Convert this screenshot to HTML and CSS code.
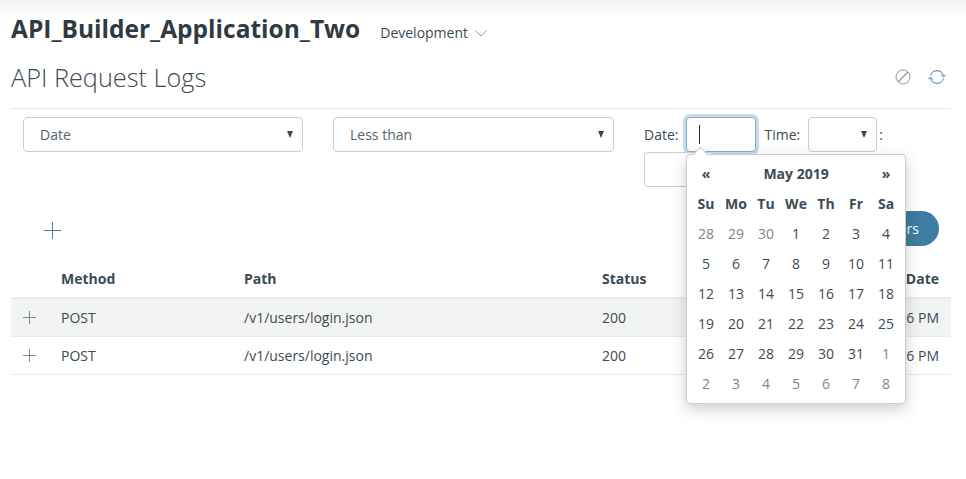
FILE: index.html
```html
<!DOCTYPE html>
<html lang="en">
<head>
    <meta charset="UTF-8">
    <meta name="viewport" content="width=device-width, initial-scale=1.0">
    <title>API Request Logs</title>
    <link rel="stylesheet" href="styles.css">
</head>
<body>
    <div class="top-shade"></div>
    <header class="app-header">
        <h1>API_Builder_Application_Two</h1>
        <span class="env">Development
            <svg class="chevron" width="12" height="7" viewBox="0 0 12 7"><path d="M0.5 0.5L6 6L11.500 0.5" fill="none" stroke="#8a97a0" stroke-width="1"/></svg>
        </span>
    </header>
    <div class="page-title">
        <h2>API Request Logs</h2>
        <div class="page-actions">
            <svg width="16" height="16" viewBox="0 0 16 16"><circle cx="8" cy="8" r="7" fill="none" stroke="#8f9ba3" stroke-width="1"/><path d="M3.300 12.700L12.700 3.300" stroke="#8f9ba3" stroke-width="1.300"/></svg>
            <svg width="18" height="16" viewBox="0 0 18 16"><path d="M2.500 6.500A6.800 6.800 0 0 1 15.500 6.500M15.500 9.500A6.800 6.800 0 0 1 2.500 9.500" fill="none" stroke="#3f7ca3" stroke-width="1"/><path d="M13 5.500L15.500 8L18 5.500M0 10.500L2.500 8L5 10.500" fill="none" stroke="#3f7ca3" stroke-width="1"/></svg>
        </div>
    </div>
    <form class="filter-row">
        <span class="select-wrap"><select class="field field-wide"><option>Date</option></select></span>
        <span class="select-wrap field-second"><select class="field field-wide"><option>Less than</option></select></span>
        <div class="date-time">
            <label>Date:</label>
            <span class="date-wrap">
                <input class="field field-date" type="text">
                <span class="caret"></span>
            </span>
            <label>Time:</label>
            <span class="select-wrap field-time"><select class="field"><option></option></select></span>
            <span>:</span>
            <span class="select-wrap field-minute"><select class="field"><option></option></select></span>
        </div>
    </form>
    <div class="filter-actions">
        <svg class="add-filter" width="17" height="17" viewBox="0 0 17 17"><path d="M0 8.500H17M8.500 0V17" stroke="#4f7aa3" stroke-width="1"/></svg>
        <button class="apply" type="button">Apply Filters</button>
    </div>
    <table class="logs">
        <thead>
            <tr><th class="col-toggle"></th><th class="col-method">Method</th><th class="col-path">Path</th><th class="col-status">Status</th><th class="col-date">Date</th></tr>
        </thead>
        <tbody>
            <tr class="odd">
                <td><svg width="13" height="13" viewBox="0 0 13 13"><path d="M0 6.500H13M6.500 0V13" stroke="#6f9296" stroke-width="1"/></svg></td>
                <td>POST</td><td>/v1/users/login.json</td><td>200</td><td class="col-date">6 PM</td>
            </tr>
            <tr>
                <td><svg width="13" height="13" viewBox="0 0 13 13"><path d="M0 6.500H13M6.500 0V13" stroke="#6f9296" stroke-width="1"/></svg></td>
                <td>POST</td><td>/v1/users/login.json</td><td>200</td><td class="col-date">6 PM</td>
            </tr>
        </tbody>
    </table>
    <div class="datepicker">
        <table>
            <colgroup><col><col><col><col><col><col><col></colgroup>
            <thead>
                <tr class="dp-nav"><th>&laquo;</th><th colspan="5">May 2019</th><th>&raquo;</th></tr>
                <tr><th>Su</th><th>Mo</th><th>Tu</th><th>We</th><th>Th</th><th>Fr</th><th>Sa</th></tr>
            </thead>
            <tbody>
                <tr><td class="other">28</td><td class="other">29</td><td class="other">30</td><td>1</td><td>2</td><td>3</td><td>4</td></tr>
                <tr><td>5</td><td>6</td><td>7</td><td>8</td><td>9</td><td>10</td><td>11</td></tr>
                <tr><td>12</td><td>13</td><td>14</td><td>15</td><td>16</td><td>17</td><td>18</td></tr>
                <tr><td>19</td><td>20</td><td>21</td><td>22</td><td>23</td><td>24</td><td>25</td></tr>
                <tr><td>26</td><td>27</td><td>28</td><td>29</td><td>30</td><td>31</td><td class="other">1</td></tr>
                <tr><td class="other">2</td><td class="other">3</td><td class="other">4</td><td class="other">5</td><td class="other">6</td><td class="other">7</td><td class="other">8</td></tr>
            </tbody>
        </table>
    </div>
</body>
</html>
```
FILE: styles.css
```css
body {
    font-family: "Open Sans", sans-serif;
    font-size: 14px;
    line-height: 20px;
    color: #3c4a54;
    margin: 0;
    padding: 0 15px 0 11px;
    background-color: white;
    overflow: hidden;
    height: 479px;
    box-sizing: border-box;
    position: relative;
}

.top-shade {
    position: absolute;
    top: 0;
    left: 0;
    right: 0;
    height: 16px;
    background: linear-gradient(#f1f1f1, white);
}

.app-header {
    position: relative;
    display: flex;
    align-items: baseline;
    height: 59px;
    padding-top: 12px;
    box-sizing: border-box;
}

.app-header h1 {
    margin: 0;
    font-size: 24.5px;
    line-height: 33px;
    font-weight: 700;
    color: #2f3a42;
}

.env {
    margin-left: 20px;
}

.chevron {
    margin-left: 3px;
    vertical-align: 1px;
}

.page-title {
    display: flex;
    justify-content: space-between;
    align-items: center;
    height: 39px;
    border-bottom: 1px solid #e6e8e9;
    padding-bottom: 10px;
}

.page-title h2 {
    margin: -3px 0 0;
    font-size: 25.3px;
    line-height: 39px;
    font-weight: 300;
}

.page-actions {
    display: flex;
    gap: 17px;
    align-items: center;
    margin-top: -4px;
    padding-right: 5px;
}

.filter-row {
    display: flex;
    padding: 8px 0 0 12px;
    height: 102px;
    box-sizing: border-box;
}

.field {
    font-family: inherit;
    font-size: 14px;
    color: #55626b;
    width: 100%;
    height: 35px;
    padding-left: 16px;
    border: 1px solid #c9ced2;
    border-radius: 4px;
    background-color: white;
    box-sizing: border-box;
    appearance: none;
}

.select-wrap {
    position: relative;
    display: block;
    width: 280px;
    height: 35px;
}

.select-wrap::after {
    content: "";
    position: absolute;
    right: 10px;
    top: 14px;
    border-left: 3.500px solid transparent;
    border-right: 3.500px solid transparent;
    border-top: 7px solid #444;
}

.field-second {
    width: 281px;
    margin-left: 30px;
}

.date-time {
    display: flex;
    flex-wrap: wrap;
    align-items: center;
    align-content: flex-start;
    width: 260px;
    margin-left: 30px;
}

.date-wrap {
    position: relative;
    display: flex;
    margin: 0 8px 0 8px;
}

.field-date {
    width: 70px;
    border-color: #7fadc9;
    box-shadow: 0 0 0 3px #c9dbe6;
    outline: none;
}

.caret {
    position: absolute;
    left: 13px;
    top: 8px;
    width: 1px;
    height: 19px;
    background-color: #333;
}

.field-time {
    width: 69px;
    margin: 0 2px 0 8px;
}

.field-minute {
    width: 70px;
}

.filter-actions {
    display: flex;
    justify-content: space-between;
    align-items: center;
    height: 35px;
    padding: 0 12px 0 33px;
}

.add-filter {
    margin-top: 4px;
}

.apply {
    font-family: inherit;
    font-size: 14px;
    color: white;
    background-color: #3f7ca3;
    border: none;
    border-radius: 18px;
    height: 35px;
    padding: 0 20px;
}

.logs {
    width: 940px;
    margin-top: 18px;
    border-collapse: collapse;
    table-layout: fixed;
}

.logs th {
    text-align: left;
    font-weight: 700;
    height: 19px;
    padding: 5px 0 8px 0;
    border-bottom: 2px solid #e8eaeb;
}

.logs td {
    height: 37px;
    padding: 0;
    border-bottom: 1px solid #e8eaeb;
}

.logs td svg {
    display: block;
    margin-left: 12px;
}

.logs .odd td {
    background-color: #f2f4f3;
}

.col-toggle {
    width: 50px;
}

.col-method {
    width: 183px;
}

.col-path {
    width: 358px;
}

.logs .col-date {
    text-align: right;
    padding-right: 12px;
}

.datepicker {
    position: absolute;
    left: 686px;
    top: 154px;
    width: 220px;
    height: 250px;
    box-sizing: border-box;
    padding: 4px;
    background-color: white;
    border: 1px solid #ccc;
    border-radius: 4px;
    box-shadow: 0 5px 15px rgba(0, 0, 0, 0.2);
}

.datepicker::before {
    content: "";
    position: absolute;
    left: 8px;
    top: -6px;
    width: 10px;
    height: 10px;
    background-color: white;
    border-top: 1px solid #ccc;
    border-left: 1px solid #ccc;
    transform: rotate(45deg);
}

.datepicker table {
    position: relative;
    border-collapse: collapse;
    table-layout: fixed;
    width: 210px;
}

.datepicker col {
    width: 30px;
}

.datepicker th,
.datepicker td {
    height: 30px;
    padding: 0;
    text-align: center;
}

.datepicker .other {
    color: #808488;
}
```
